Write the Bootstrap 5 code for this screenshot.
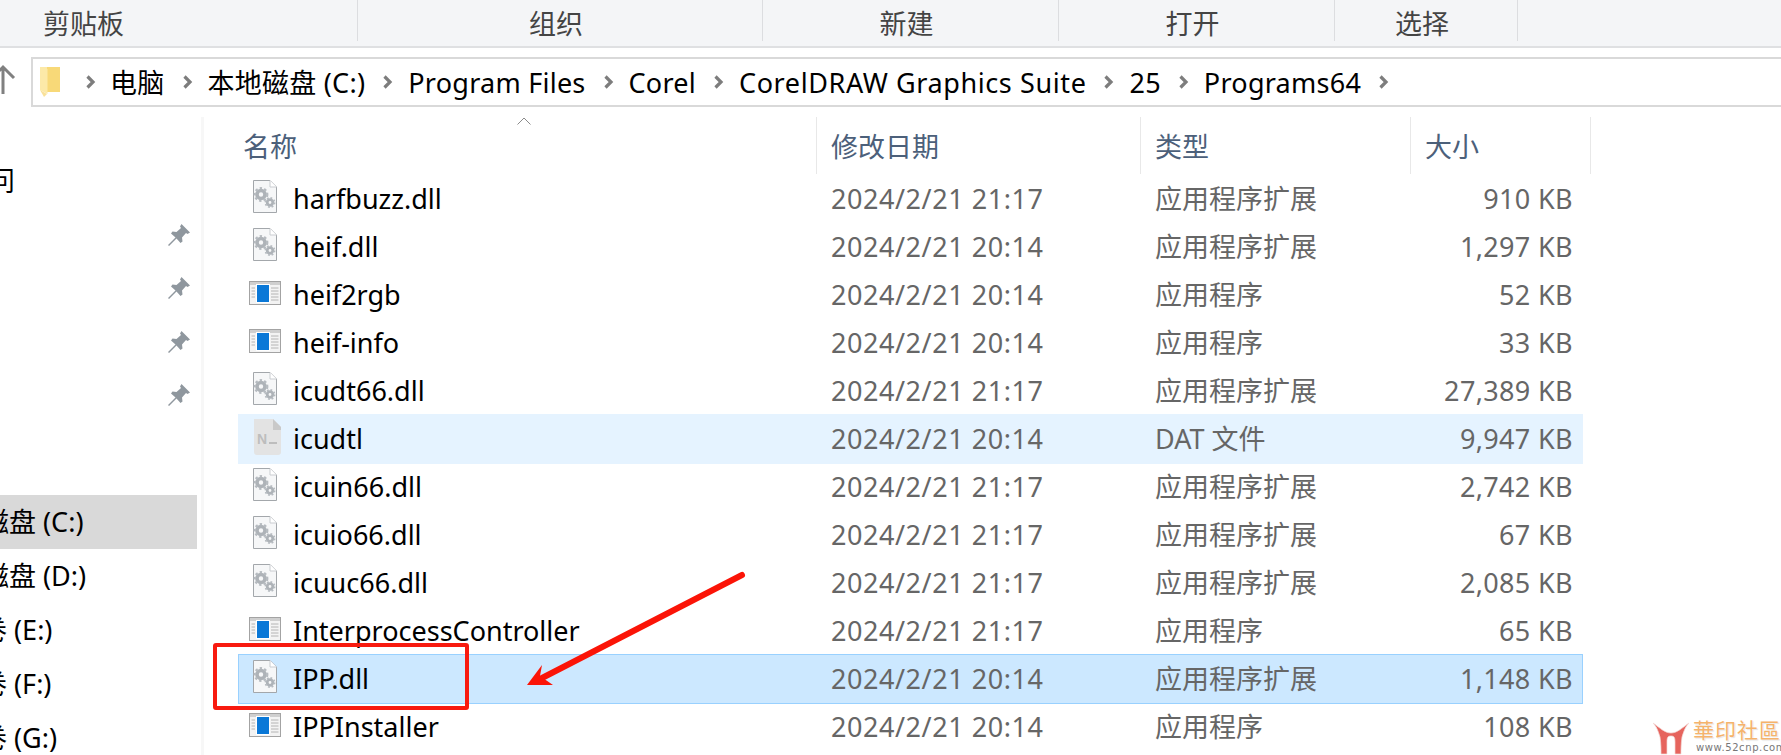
<!DOCTYPE html>
<html lang="zh">
<head>
<meta charset="utf-8">
<title>Programs64</title>
<link href="https://cdn.jsdelivr.net/npm/bootstrap@5.3.0/dist/css/bootstrap.min.css" rel="stylesheet">
<style>
html,body{height:755px;overflow:hidden;background:#fff}
body{font-family:"Noto Sans","Noto Sans CJK SC",sans-serif;font-size:27px;color:#000;line-height:1.2}
.shot{position:relative;width:1781px;height:755px;overflow:hidden}
.ribbon{height:48px;background:#f4f5f7;border-bottom:2px solid #dfe0e2;color:#444}
.rib-sec{height:41px;border-right:1px solid #dcdde0;display:flex;align-items:center;justify-content:center;padding-right:8px;padding-top:8px}
.rib-1{width:358px;justify-content:flex-start;padding-left:43px}
.rib-2{width:405px}.rib-3{width:296px}.rib-4{width:276px}.rib-5{width:183px}
.addr{height:69px;position:relative}
.up-arr{width:16px;height:30px;margin-top:1px}
.crumbs{height:50px;margin-left:15px;flex:1;margin-top:9px;margin-right:-4px;border:2px solid #d9d9d9;border-right:0;padding-left:6px;white-space:nowrap;letter-spacing:.25px}
.folder-ic{width:22px;height:30px;margin-right:25px}
.chev{width:10px;height:14px;margin:0 15px 0 18px;flex:none}
.chev-first{margin-left:0;margin-right:14px}
.crumb-t{padding-top:2px}
.crumb-long{letter-spacing:.6px}
.pane{height:638px}
.side{width:201px;flex:none;padding-top:37px;overflow:hidden;white-space:nowrap}
.nav-r{height:53.6px;display:flex;align-items:center;position:relative}
.nav-r svg{position:absolute;left:167px;top:15px;width:24px;height:24px}
.clip-t{margin-left:-39px;display:block}
.gap-nav{height:73px}
.drv{height:54px;display:flex;align-items:center;width:197px;overflow:hidden}
.drv-cut{margin-left:-18px}
.drv-cut-2{margin-left:-74px}
.drv-sel{background:#d9d9d9}
.split{width:3px;flex:none;background:#f7f7f7}
.main{flex:1;min-width:0}
.heads{height:57px;color:#4c607a;position:relative}
.hd{height:57px;border-right:1px solid #e8e8e8;padding-top:14px;padding-left:14px}
.hd-1{width:613px;padding-left:39px}
.hd-2{width:324px}.hd-3{width:270px}.hd-4{width:180px}
.caret-up{position:absolute;left:313px;top:0;width:14px;height:8px}
.rows{padding-left:34px;width:1379px;margin-top:1px}
.frow{height:48px;display:flex;align-items:center;padding-left:11px;padding-right:10px;color:#666}
.frow-hover{height:50px;margin:-1px 0;background:#e5f3ff;position:relative}
.frow-sel{background:#cce8ff;outline:1px solid #99d1ff;outline-offset:-1px}
.ic{width:32px;height:36px;flex:none;margin-right:12px;margin-top:-4px}
.c-name{width:582px;margin-right:0;color:#000;flex:none;display:flex;align-items:center}
.c-date{width:324px;flex:none;letter-spacing:.55px}
.c-type{flex:1}
.c-size{flex:none;text-align:right;letter-spacing:.35px}
.mark-box{position:absolute;left:213px;top:643px;width:256px;height:67px;border:4px solid #f81a0f;border-radius:3px}
.mark-arrow{position:absolute;left:510px;top:560px;width:250px;height:140px}
.wm{position:absolute;left:1653px;top:718px;width:128px;height:37px}
.wm-logo{position:absolute;left:0;top:2px;width:36px;height:35px}
.wm-t{position:absolute;left:40px;top:0;font-family:"Noto Sans CJK TC",sans-serif;font-size:21px;line-height:23px;letter-spacing:1px;color:#f5b36b;text-shadow:0 0 2px #fff,1px 1px 1px #ddd;white-space:nowrap}
.wm-u{position:absolute;left:43px;top:24px;font-family:"DejaVu Sans",sans-serif;font-size:10px;line-height:12px;letter-spacing:.6px;color:#777;white-space:nowrap}
</style>
</head>
<body>
<svg width="0" height="0" class="d-block" style="position:absolute">
<defs>
<symbol id="i-dll" viewBox="0 0 32 36">
<path d="M4.5 1.5H21L27.500 8V33.500H4.500Z" fill="#f6f7f8" stroke="#a3a7ab"/>
<path d="M21 1.500V8H27.500" fill="#fff" stroke="#c9ccd0"/>
<circle cx="12" cy="15.500" r="4" fill="none" stroke="#aeb3b8" stroke-width="3.600"/>
<circle cx="12" cy="15.500" r="6.300" fill="none" stroke="#b6bbc0" stroke-width="2.200" stroke-dasharray="2.400 2.200"/>
<circle cx="21" cy="23.500" r="2.800" fill="none" stroke="#aeb3b8" stroke-width="2.800"/>
<circle cx="21" cy="23.500" r="4.600" fill="none" stroke="#b6bbc0" stroke-width="1.800" stroke-dasharray="1.800 1.800"/>
</symbol>
<symbol id="i-exe" viewBox="0 0 32 36">
<rect x=".5" y="6.500" width="31" height="23" fill="#f3f3f3" stroke="#a3a3a3"/>
<rect x="1" y="7" width="30" height="3" fill="#cfcfcf"/>
<rect x="7" y="9" width="14" height="19" fill="#fff"/>
<rect x="8" y="10" width="12" height="17" fill="#0a78d7"/>
<path d="M2.500 13H6M2.500 16H6M2.500 19H6M2.500 22H6M22 13H29.500M22 16H29.500M22 19H29.500M22 22H29.500M22 25H29.500" stroke="#b4b4b4" stroke-width="1"/>
</symbol>
<symbol id="i-pin" viewBox="0 0 24 24">
<path d="M14.500 1 23 9.500 20.500 11 19 10 15 14.500 15.500 18.500 13.500 20 9.500 15.500 2 23 1 22 8.500 14.500 4 10.500 5.500 8.500 9.500 9 14 5 13 3.500Z" fill="#8f979e"/>
</symbol>
<symbol id="i-chev" viewBox="0 0 10 14">
<path d="M1.500 1.500 7 7 1.500 12.500" fill="none" stroke="#7d7d7d" stroke-width="3.200"/>
</symbol>
</defs>
</svg>

<div class="shot">
  <div class="ribbon d-flex">
    <div class="rib-sec rib-1">剪贴板</div>
    <div class="rib-sec rib-2">组织</div>
    <div class="rib-sec rib-3">新建</div>
    <div class="rib-sec rib-4">打开</div>
    <div class="rib-sec rib-5">选择</div>
  </div>

  <div class="addr d-flex align-items-start">
    <svg class="up-arr flex-none mt-3" viewBox="0 0 16 30"><path d="M3 30V3M-8 14 3 3 14 14" fill="none" stroke="#808080" stroke-width="3"/></svg>
    <div class="crumbs d-flex align-items-center">
      <svg class="folder-ic flex-none" viewBox="0 0 22 30"><path d="M6 0H21V25H6Z" fill="#f8d978"/><path d="M1 0H8V2H8.500V27L1 23Z" fill="#fce9a8"/><path d="M1 23 5 30 8 27Z" fill="#f9e19a"/></svg>
      <svg class="chev chev-first"><use href="#i-chev"/></svg><span class="crumb-t">电脑</span>
      <svg class="chev"><use href="#i-chev"/></svg><span class="crumb-t">本地磁盘 (C:)</span>
      <svg class="chev"><use href="#i-chev"/></svg><span class="crumb-t">Program Files</span>
      <svg class="chev"><use href="#i-chev"/></svg><span class="crumb-t">Corel</span>
      <svg class="chev"><use href="#i-chev"/></svg><span class="crumb-t crumb-long">CorelDRAW Graphics Suite</span>
      <svg class="chev"><use href="#i-chev"/></svg><span class="crumb-t">25</span>
      <svg class="chev"><use href="#i-chev"/></svg><span class="crumb-t">Programs64</span>
      <svg class="chev"><use href="#i-chev"/></svg>
    </div>
  </div>

  <div class="pane d-flex">
    <div class="side">
      <div class="nav-r"><span class="clip-t">访问</span></div>
      <div class="nav-r"><svg><use href="#i-pin"/></svg></div>
      <div class="nav-r"><svg><use href="#i-pin"/></svg></div>
      <div class="nav-r"><svg><use href="#i-pin"/></svg></div>
      <div class="nav-r"><svg><use href="#i-pin"/></svg></div>
      <div class="gap-nav"></div>
      <div class="drv drv-sel"><span class="drv-cut">磁盘 (C:)</span></div>
      <div class="drv"><span class="drv-cut">磁盘 (D:)</span></div>
      <div class="drv"><span class="drv-cut-2">新加卷 (E:)</span></div>
      <div class="drv"><span class="drv-cut-2">新加卷 (F:)</span></div>
      <div class="drv"><span class="drv-cut-2">新加卷 (G:)</span></div>
    </div>
    <div class="split"></div>
    <div class="main">
      <div class="heads d-flex">
        <svg class="caret-up" viewBox="0 0 14 8"><path d="M.5 7.500 7 1 13.500 7.500" fill="none" stroke="#8a8a8a"/></svg>
        <div class="hd hd-1">名称</div>
        <div class="hd hd-2">修改日期</div>
        <div class="hd hd-3">类型</div>
        <div class="hd hd-4">大小</div>
      </div>
      <div class="rows">
        <div class="frow"><div class="c-name"><svg class="ic"><use href="#i-dll"/></svg>harfbuzz.dll</div><div class="c-date">2024/2/21 21:17</div><div class="c-type">应用程序扩展</div><div class="c-size">910 KB</div></div>
        <div class="frow"><div class="c-name"><svg class="ic"><use href="#i-dll"/></svg>heif.dll</div><div class="c-date">2024/2/21 20:14</div><div class="c-type">应用程序扩展</div><div class="c-size">1,297 KB</div></div>
        <div class="frow"><div class="c-name"><svg class="ic"><use href="#i-exe"/></svg>heif2rgb</div><div class="c-date">2024/2/21 20:14</div><div class="c-type">应用程序</div><div class="c-size">52 KB</div></div>
        <div class="frow"><div class="c-name"><svg class="ic"><use href="#i-exe"/></svg>heif-info</div><div class="c-date">2024/2/21 20:14</div><div class="c-type">应用程序</div><div class="c-size">33 KB</div></div>
        <div class="frow"><div class="c-name"><svg class="ic"><use href="#i-dll"/></svg>icudt66.dll</div><div class="c-date">2024/2/21 21:17</div><div class="c-type">应用程序扩展</div><div class="c-size">27,389 KB</div></div>
        <div class="frow frow-hover"><div class="c-name"><svg class="ic" viewBox="0 0 32 36"><path d="M5 0H24L32 8V33Q32 36 29 36H8Q5 36 5 33Z" fill="#e3e3e3"/><path d="M24 0 32 8V11H24Z" fill="#c9c9c9"/><text x="8" y="25" font-family="Liberation Sans" font-weight="700" font-size="14" fill="#bdbdbd">N</text><path d="M20 24H28" stroke="#bdbdbd" stroke-width="2"/></svg>icudtl</div><div class="c-date">2024/2/21 20:14</div><div class="c-type">DAT 文件</div><div class="c-size">9,947 KB</div></div>
        <div class="frow"><div class="c-name"><svg class="ic"><use href="#i-dll"/></svg>icuin66.dll</div><div class="c-date">2024/2/21 21:17</div><div class="c-type">应用程序扩展</div><div class="c-size">2,742 KB</div></div>
        <div class="frow"><div class="c-name"><svg class="ic"><use href="#i-dll"/></svg>icuio66.dll</div><div class="c-date">2024/2/21 21:17</div><div class="c-type">应用程序扩展</div><div class="c-size">67 KB</div></div>
        <div class="frow"><div class="c-name"><svg class="ic"><use href="#i-dll"/></svg>icuuc66.dll</div><div class="c-date">2024/2/21 21:17</div><div class="c-type">应用程序扩展</div><div class="c-size">2,085 KB</div></div>
        <div class="frow"><div class="c-name"><svg class="ic"><use href="#i-exe"/></svg>InterprocessController</div><div class="c-date">2024/2/21 21:17</div><div class="c-type">应用程序</div><div class="c-size">65 KB</div></div>
        <div class="frow frow-hover frow-sel"><div class="c-name"><svg class="ic"><use href="#i-dll"/></svg>IPP.dll</div><div class="c-date">2024/2/21 20:14</div><div class="c-type">应用程序扩展</div><div class="c-size">1,148 KB</div></div>
        <div class="frow"><div class="c-name"><svg class="ic"><use href="#i-exe"/></svg>IPPInstaller</div><div class="c-date">2024/2/21 20:14</div><div class="c-type">应用程序</div><div class="c-size">108 KB</div></div>
      </div>
    </div>
  </div>

  <div class="mark-box"></div>
  <svg class="mark-arrow" viewBox="0 0 250 140">
    <path d="M232 15 32 118" stroke="#fb1407" stroke-width="6" stroke-linecap="round" fill="none"/>
    <path d="M17 125 32 105 30 116 43 125Z" fill="#fb1407"/>
  </svg>

  <div class="wm">
    <svg class="wm-logo" viewBox="0 0 36 35">
      <path d="M0 3C4 7 5 11 7 17 8 24 8 29 8 34H14V22C14 17 15 16 18 16 21 16 22 17 22 22V34H28C28 29 28 24 29 17 31 11 32 7 36 3 29 8 24 13 18 13 12 13 7 8 0 3Z" fill="#e6645d" stroke="#f3d9d6" stroke-width=".7"/>
      <path d="M18 20V34M15.500 23V34M20.500 23V34" stroke="#fff" stroke-width=".8"/>
    </svg>
    <div class="wm-t">華印社區</div>
    <div class="wm-u">www.52cnp.com</div>
  </div>
</div>
<script src="https://cdn.jsdelivr.net/npm/bootstrap@5.3.0/dist/js/bootstrap.bundle.min.js"></script>
</body>
</html>
